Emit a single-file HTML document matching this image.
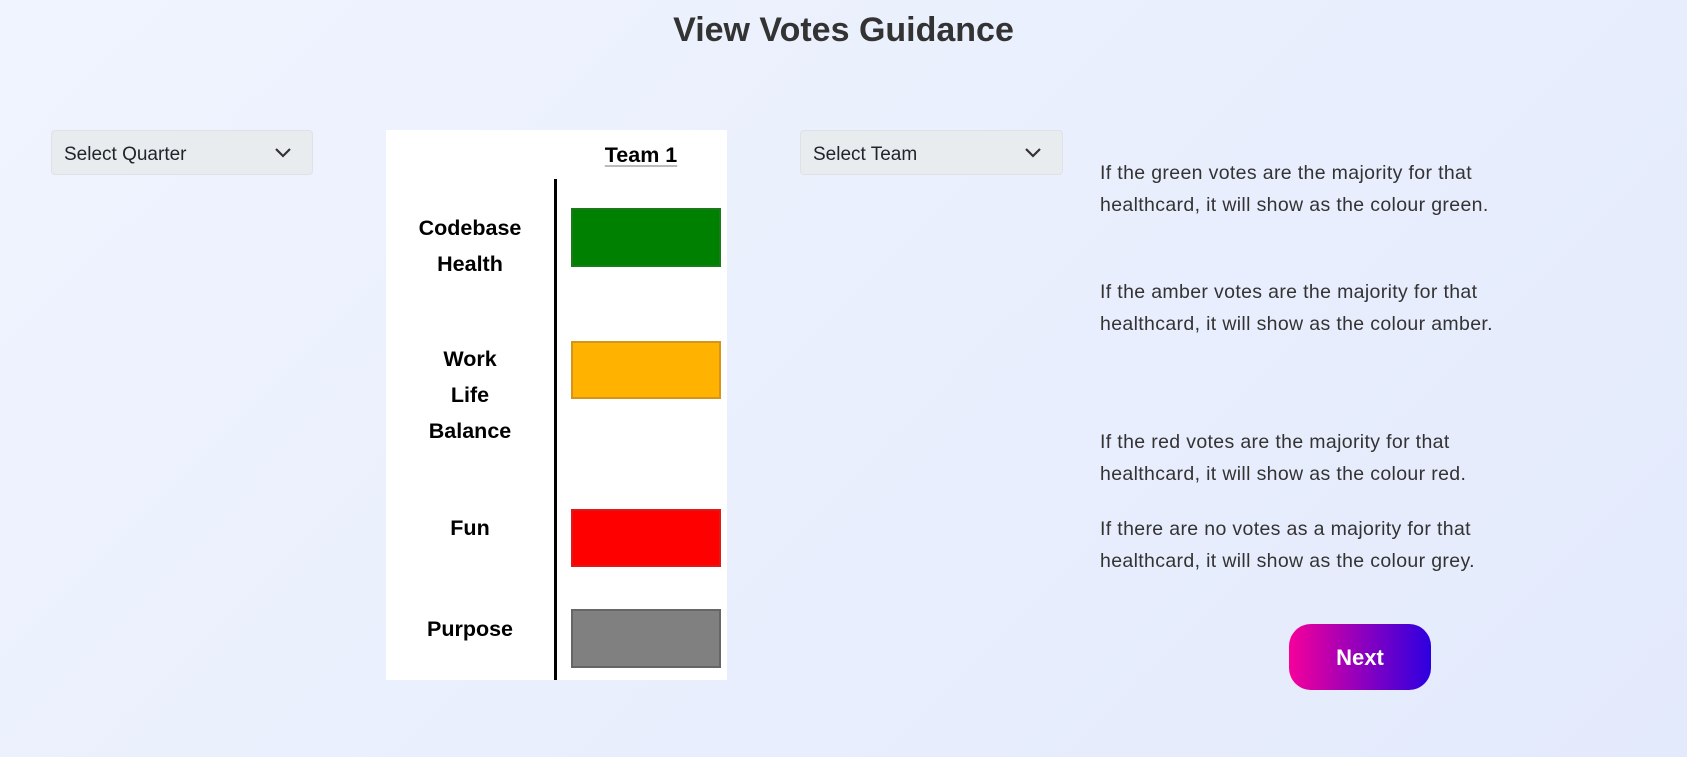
<!DOCTYPE html>
<html><head><meta charset="utf-8"><style>
*{margin:0;padding:0;box-sizing:border-box}
body{width:1687px;height:757px;overflow:hidden;background:linear-gradient(135deg,#f0f4fe 0%,#e3eafc 100%);font-family:"Liberation Sans",sans-serif;position:relative;color:#212529}
.a{position:absolute}
h1{position:absolute;left:0;width:1687px;top:11px;text-align:center;font-size:34px;font-weight:bold;color:#333}
.sel{position:absolute;height:45px;background:#e9ecef;border:1px solid #dee2e6;border-radius:4px;font-size:19px;padding-left:12px;line-height:47px;color:#212529}
.sel svg{position:absolute;right:20px;top:16px}
.panel{left:386px;top:130px;width:341px;height:550px;background:#fff}
.lbl{position:absolute;width:160px;left:390px;text-align:center;font-weight:bold;font-size:21.5px;color:#000;line-height:36px}
.bar{position:absolute;left:571px;width:150px;border:2px solid}
.t{position:absolute;left:1100px;font-size:19.5px;letter-spacing:0.35px;line-height:32px;color:#333;white-space:nowrap}
</style></head><body>
<h1>View Votes Guidance</h1>
<div class="sel" style="left:51px;top:130px;width:262px">Select Quarter<svg width="18" height="12" viewBox="0 0 18 12"><path d="M2 2l7 7 7-7" stroke="#333" stroke-width="2.2" fill="none"/></svg></div>
<div class="sel" style="left:800px;top:130px;width:263px">Select Team<svg width="18" height="12" viewBox="0 0 18 12"><path d="M2 2l7 7 7-7" stroke="#333" stroke-width="2.2" fill="none"/></svg></div>
<div class="a panel"></div>
<div class="a" style="left:601px;top:143px;width:80px;text-align:center;font-weight:bold;font-size:21.5px;color:#000;text-decoration:underline;text-decoration-color:#bbb;text-underline-offset:3px">Team 1</div>
<div class="a" style="left:554px;top:179px;width:3px;height:501px;background:#000"></div>
<div class="lbl" style="top:210px">Codebase<br>Health</div>
<div class="lbl" style="top:341px">Work<br>Life<br>Balance</div>
<div class="lbl" style="top:510px">Fun</div>
<div class="lbl" style="top:611px">Purpose</div>
<div class="bar" style="top:208px;height:59px;background:#008000;border-color:#1a7a1a"></div>
<div class="bar" style="top:341px;height:58px;background:#ffb300;border-color:#d4951a"></div>
<div class="bar" style="top:509px;height:58px;background:#ff0000;border-color:#dd1a1a"></div>
<div class="bar" style="top:609px;height:59px;background:#808080;border-color:#666"></div>
<div class="t" style="top:157px">If the green votes are the majority for that<br>healthcard, it will show as the colour green.</div>
<div class="t" style="top:276px">If the amber votes are the majority for that<br>healthcard, it will show as the colour amber.</div>
<div class="t" style="top:426px">If the red votes are the majority for that<br>healthcard, it will show as the colour red.</div>
<div class="t" style="top:513px">If there are no votes as a majority for that<br>healthcard, it will show as the colour grey.</div>
<div class="a" style="left:1289px;top:624px;width:142px;height:66px;border-radius:22px;background:linear-gradient(90deg,#f5009a,#2d00e0);color:#fff;font-weight:bold;font-size:22px;text-align:center;line-height:68px">Next</div>
</body></html>
